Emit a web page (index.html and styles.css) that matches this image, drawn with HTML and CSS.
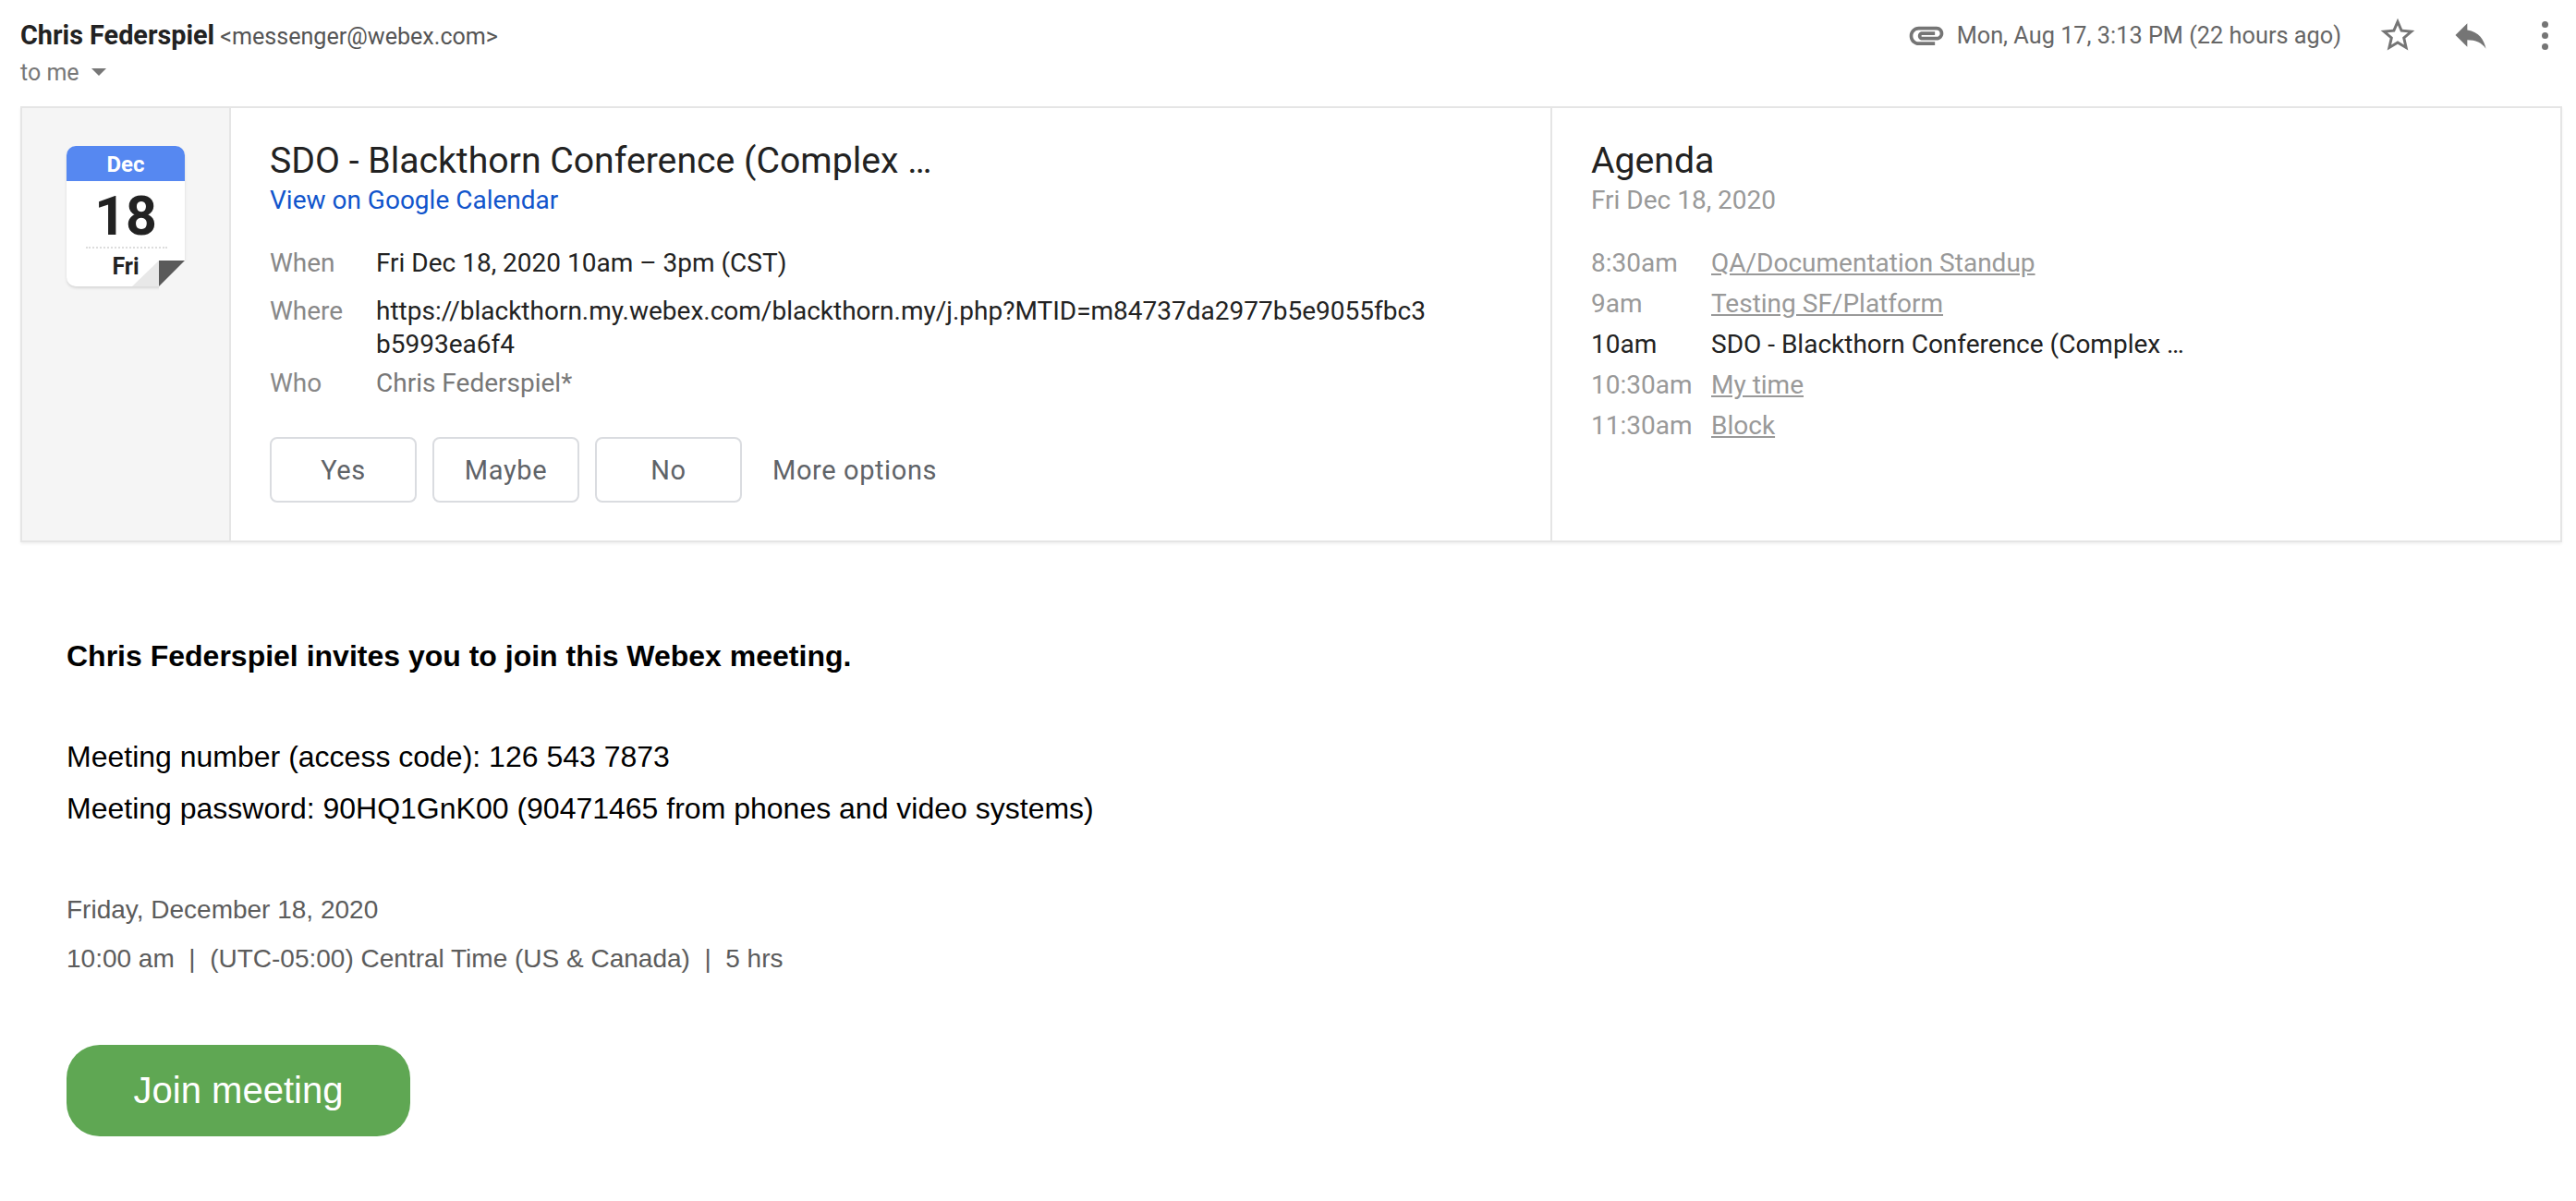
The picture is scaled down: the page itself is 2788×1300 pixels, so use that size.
FILE: index.html
```html
<!DOCTYPE html>
<html lang="en">
<head>
<meta charset="UTF-8">
<title>Chris Federspiel - Invitation</title>
<link rel="stylesheet" href="styles.css">
</head>
<body>

<header class="msg-head">
    <div class="sender">
        <div class="sender-line"><span class="sender-name">Chris Federspiel</span> <span class="sender-mail">&lt;messenger@webex.com&gt;</span></div>
        <div class="to-line">to me <span class="to-arrow"></span></div>
    </div>
    <div class="msg-meta">
        <svg class="icon icon-clip" viewBox="0 0 24 24"><path d="M2 12.5C2 9.46 4.46 7 7.5 7H18c2.21 0 4 1.79 4 4s-1.79 4-4 4H9.5C8.12 15 7 13.88 7 12.5S8.12 10 9.5 10H17v2H9.41c-.55 0-.55 1 0 1H18c1.1 0 2-.9 2-2s-.9-2-2-2H7.5C5.57 9 4 10.57 4 12.5S5.57 16 7.5 16H17v2H7.5C4.46 18 2 15.54 2 12.5z"/></svg>
        <span class="msg-date">Mon, Aug 17, 3:13 PM (22 hours ago)</span>
        <svg class="icon icon-star" viewBox="0 0 24 24"><path d="M22 9.24l-7.19-.62L12 2 9.19 8.63 2 9.24l5.46 4.73L5.82 21 12 17.27 18.18 21l-1.63-7.03L22 9.24zM12 15.4l-3.76 2.27 1-4.28-3.32-2.88 4.38-.38L12 6.1l1.71 4.04 4.38.38-3.32 2.88 1 4.28L12 15.4z"/></svg>
        <svg class="icon icon-reply" viewBox="0 0 24 24"><path d="M10 9V5l-7 7 7 7v-4.1c5 0 8.5 1.6 11 5.1-1-5-4-10-11-11z"/></svg>
        <div class="dots"><i></i><i></i><i></i></div>
    </div>
</header>

<section class="invite">
    <div class="invite-side">
        <div class="cal">
            <div class="cal-month">Dec</div>
            <div class="cal-day">18</div>
            <div class="cal-dots"></div>
            <div class="cal-week">Fri</div>
            <svg class="cal-fold" viewBox="0 0 57 28"><polygon points="29,28 57,0 62,0 62,33 29,33" fill="#f5f5f5"/><polygon points="29,0 0,28 29,28" fill="#e8e8e8"/><polygon points="29,0 57,0 29,28" fill="#5a5a5a"/></svg>
        </div>
    </div>

    <div class="invite-main">
        <h2 class="invite-title">SDO - Blackthorn Conference (Complex …</h2>
        <a class="cal-link" href="#">View on Google Calendar</a>
        <div class="details">
            <div class="d-label">When</div>
            <div class="d-value">Fri Dec 18, 2020 10am – 3pm (CST)</div>
            <div class="d-label">Where</div>
            <div class="d-value d-where">https://blackthorn.my.webex.com/blackthorn.my/j.php?MTID=m84737da2977b5e9055fbc3<br>b5993ea6f4</div>
            <div class="d-label">Who</div>
            <div class="d-value d-who">Chris Federspiel*</div>
        </div>
        <div class="rsvp">
            <button type="button" class="rsvp-btn">Yes</button>
            <button type="button" class="rsvp-btn">Maybe</button>
            <button type="button" class="rsvp-btn">No</button>
            <span class="rsvp-more">More options</span>
        </div>
    </div>

    <div class="agenda">
        <h2 class="invite-title">Agenda</h2>
        <div class="agenda-date">Fri Dec 18, 2020</div>
        <div class="agenda-list">
            <div class="a-time">8:30am</div><a class="a-item" href="#">QA/Documentation Standup</a>
            <div class="a-time">9am</div><a class="a-item" href="#">Testing SF/Platform</a>
            <div class="a-time a-now">10am</div><div class="a-now">SDO - Blackthorn Conference (Complex …</div>
            <div class="a-time">10:30am</div><a class="a-item" href="#">My time</a>
            <div class="a-time">11:30am</div><a class="a-item" href="#">Block</a>
        </div>
    </div>
</section>

<main class="mail-body">
    <p class="lead">Chris Federspiel invites you to join this Webex meeting.</p>
    <div class="codes">
        <p>Meeting number (access code): 126 543 7873</p>
        <p>Meeting password: 90HQ1GnK00 (90471465 from phones and video systems)</p>
    </div>
    <div class="when">
        <p>Friday, December 18, 2020</p>
        <p>10:00 am &nbsp;|&nbsp; (UTC-05:00) Central Time (US &amp; Canada) &nbsp;|&nbsp; 5 hrs</p>
    </div>
    <a class="join" href="#">Join meeting</a>
</main>

</body>
</html>
```

FILE: styles.css
```css
body {
    margin: 0;
    background: #fff;
    font-family: Roboto, Arial, sans-serif;
    color: #222;
}
p, h2 {
    margin: 0;
}
a {
    color: inherit;
}

/* message header */
.msg-head {
    display: flex;
    justify-content: space-between;
    height: 115px;
    padding: 20px 30px 0 22px;
    box-sizing: border-box;
}
.sender-line {
    height: 36px;
    line-height: 36px;
}
.sender-name {
    font-size: 28.8px;
    font-weight: 700;
    color: #222;
}
.sender-mail {
    font-size: 25.1px;
    color: #555;
    margin-left: 2px;
}
.to-line {
    display: flex;
    align-items: center;
    height: 36px;
    margin-top: 4px;
    font-size: 25px;
    color: #777;
}
.to-arrow {
    width: 0;
    height: 0;
    margin-left: 13px;
    border-left: 8px solid transparent;
    border-right: 8px solid transparent;
    border-top: 8px solid #777;
}
.msg-meta {
    display: flex;
    align-items: center;
    height: 36px;
}
.icon {
    width: 44px;
    height: 44px;
    fill: #757575;
    flex: none;
}
.msg-date {
    font-size: 25.3px;
    color: #666;
    margin: 0 39px 0 11px;
}
.icon-reply {
    margin-left: 35px;
}
.dots {
    display: flex;
    flex-direction: column;
    gap: 5px;
    margin-left: 55px;
}
.dots i {
    width: 7px;
    height: 7px;
    border-radius: 50%;
    background: #757575;
}

/* invite card */
.invite {
    display: flex;
    height: 472px;
    margin: 0 15px 0 22px;
    border: 2px solid #e5e5e5;
    box-sizing: border-box;
    box-shadow: 0 2px 3px rgba(0, 0, 0, 0.06);
}
.invite-side {
    width: 226px;
    flex: none;
    background: #f5f5f5;
    border-right: 2px solid #e5e5e5;
    padding: 41px 0 0 48px;
    box-sizing: border-box;
}
.cal {
    position: relative;
    width: 128px;
    height: 152px;
    background: #fff;
    border-radius: 10px;
    box-shadow: 0 2px 3px rgba(0, 0, 0, 0.12);
    text-align: center;
    font-weight: 700;
    color: #222;
}
.cal-month {
    height: 38px;
    line-height: 40px;
    background: #5688f1;
    border-radius: 10px 10px 0 0;
    color: #fff;
    font-size: 24px;
}
.cal-day {
    height: 66px;
    line-height: 66px;
    margin-top: 5px;
    font-size: 59px;
}
.cal-dots {
    margin: 0 19px 0 21px;
    border-top: 2px dotted #ddd;
}
.cal-week {
    line-height: 36px;
    margin-top: 2px;
    font-size: 25px;
}
.cal-fold {
    position: absolute;
    right: 0;
    bottom: 0;
    width: 57px;
    height: 28px;
    overflow: visible;
}

.invite-main {
    width: 1430px;
    flex: none;
    padding: 37px 0 0 42px;
    box-sizing: border-box;
    border-right: 2px solid #e5e5e5;
}
.invite-title {
    font-size: 39.2px;
    line-height: 41px;
    font-weight: 400;
    color: #222;
}
.cal-link {
    display: block;
    margin-top: 1px;
    font-size: 28px;
    line-height: 41px;
    color: #1155cc;
    text-decoration: none;
}
.details {
    display: grid;
    grid-template-columns: 115px 1fr;
    margin-top: 30px;
    font-size: 28px;
    line-height: 36px;
}
.details > div {
    margin-bottom: 16px;
}
.d-label {
    color: #888;
}
.d-value {
    color: #222;
}
.details .d-where {
    margin-bottom: 6px;
}
.d-who {
    color: #777;
}
.rsvp {
    display: flex;
    align-items: center;
    gap: 17px;
    margin-top: 24px;
}
.rsvp-btn {
    width: 159px;
    height: 71px;
    padding: 0;
    background: #fff;
    border: 2px solid #dadce0;
    border-radius: 8px;
    font-family: Roboto, Arial, sans-serif;
    font-size: 29px;
    letter-spacing: 0.6px;
    color: #5f6368;
}
.rsvp-more {
    margin-left: 16px;
    font-size: 29px;
    letter-spacing: 0.6px;
    color: #5f6368;
}

.agenda {
    flex: 1;
    padding: 37px 0 0 42px;
}
.agenda-date {
    margin-top: 1px;
    font-size: 28px;
    line-height: 41px;
    color: #999;
}
.agenda-list {
    display: grid;
    grid-template-columns: 130px 1fr;
    grid-auto-rows: 44px;
    align-items: center;
    margin-top: 25px;
    font-size: 28px;
}
.a-time {
    color: #999;
}
.a-item {
    justify-self: start;
    color: #999;
}
.a-now {
    color: #222;
}

/* mail content */
.mail-body {
    padding: 105px 0 0 72px;
    font-family: "Liberation Sans", Arial, sans-serif;
}
.lead {
    font-size: 32px;
    line-height: 36px;
    font-weight: 700;
    color: #000;
}
.codes {
    margin-top: 63px;
    font-size: 32px;
    line-height: 56px;
    color: #000;
}
.when {
    margin-top: 55px;
    font-size: 28px;
    line-height: 53px;
    color: #5c5c5c;
}
.join {
    display: block;
    width: 372px;
    height: 99px;
    margin-top: 67px;
    background: #5fa753;
    border-radius: 36px;
    color: #fff;
    font-size: 40px;
    line-height: 99px;
    text-align: center;
    text-decoration: none;
}
```
